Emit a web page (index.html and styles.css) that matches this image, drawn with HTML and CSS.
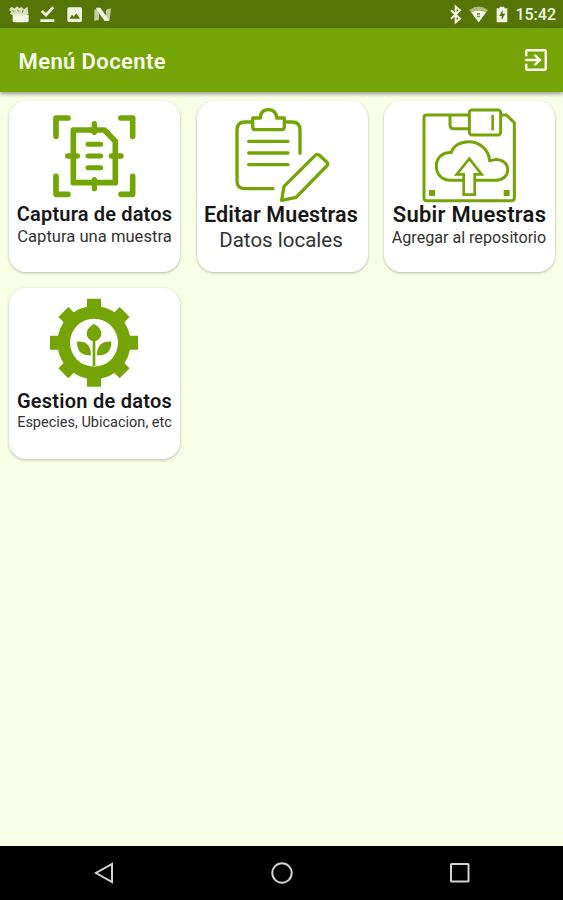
FILE: index.html
```html
<!DOCTYPE html>
<html lang="es">
<head>
<meta charset="utf-8">
<title>Menú Docente</title>
<link rel="stylesheet" href="styles.css">
</head>
<body>
<header class="status">
  <svg class="status-left" viewBox="0 0 360 84">
    <g fill="#f1f5e3">
      <path d="M38 44H86V62Q86 67 81 67H43Q38 67 38 62Z"/>
      <path d="M29 25l8-5 6 6 8-7 8 6 5-5 7 8 12-7 2 21-8 4H39l-10-5 5-6-6-5z" opacity=".85"/>
      <path d="M37 32l6 3M52 29l4 6M69 30l-2 8" stroke="#64800f" stroke-width="3"/>
      <path d="M121 58h42v8h-42zM122 35l6-5 10 9 19-20 6 6-25 26z"/>
      <path fill-rule="evenodd" d="M207 22H241Q246 22 246 27V61Q246 66 241 66H207Q202 66 202 61V27Q202 22 207 22ZM208 56H240L229 40L221 50L216 44Z"/>
      <path d="M283 30l14-6 21 23V29l15-4-4 34-12 4-20-22v18l-14 4z" opacity=".7"/>
      <path d="M287 23h14l28 40h-15z"/>
    </g>
  </svg>
  <div class="status-right">
    <svg class="status-icons" viewBox="52 0 190 84">
      <path d="M64 31L91 56L78 67V20L91 31L64 56" fill="none" stroke="#f1f5e3" stroke-width="6"/>
      <path d="M119 30Q147 9 175 30L147 67Z" fill="#a8bd75"/>
      <path d="M125 37Q147 27 169 37L147 67Z" fill="#f7faef"/>
      <path d="M142 39h9v5h-9zm0 8h9v5h-9z" fill="#76932f"/>
      <path d="M201 25h9v-5h14v5h9v42h-32z" fill="#f1f5e3"/>
      <path d="M219 30l-10 18h7v12l11-19h-8z" fill="#577506"/>
    </svg>
    <span class="clock">15:42</span>
  </div>
</header>
<div class="appbar">
  <h1>Menú Docente</h1>
  <svg class="exit" viewBox="3 3 18 18"><path fill="#fbfdf5" d="M10.09 15.59L11.5 17l5-5-5-5-1.41 1.41L12.67 11H3v2h9.67l-2.58 2.59zM19 3H5c-1.11 0-2 .9-2 2v4h2V5h14v14H5v-4H3v4c0 1.100.89 2 2 2h14c1.100 0 2-.9 2-2V5c0-1.100-.9-2-2-2z"/></svg>
</div>
<main class="grid">
  <section class="card capture">
    <svg class="art" viewBox="27 24 513 306">
      <g fill="none" stroke="#75a406" stroke-linecap="round">
        <g stroke-width="17">
          <path d="M204 75H168V130M363 75H398V130M168 250V304H204M398 250V304H363" stroke-linejoin="round"/>
        </g>
        <path d="M220 111H313L346 145V269H220Z" stroke-width="17" stroke-linejoin="round"/>
        <path d="M283 92V118M283 260V287M203 189H232M334 189H363" stroke-width="16"/>
        <path d="M264 154H302M264 189H302M264 224H302" stroke-width="15"/>
      </g>
    </svg>
    <h2>Captura de datos</h2>
    <p>Captura una muestra</p>
  </section>
  <section class="card edit">
    <svg class="art" viewBox="26 27 513 306">
      <g fill="none" stroke="#75a406" stroke-width="10" stroke-linecap="round" stroke-linejoin="round">
        <path d="M188 90H170Q146 90 146 114V266Q146 290 170 290H254M292 90H311Q335 90 335 114V184"/>
        <path d="M193 78H216Q217 53 240 53Q263 53 265 78H288V104Q288 113 279 113H202Q193 113 193 104Z"/>
        <path d="M181 148H299M181 183H299M181 218H299"/>
        <path d="M280 325L287 283L380 191Q387 184 395 191L415 210Q421 216 415 222L323 316Z"/>
      </g>
    </svg>
    <h2>Editar Muestras</h2>
    <p>Datos locales</p>
  </section>
  <section class="card upload">
    <svg class="art" viewBox="30 26 513 306">
      <g fill="none" stroke="#75a406" stroke-width="9" stroke-linejoin="round">
        <path d="M284 68H158Q150 68 150 76V317Q150 325 158 325H413Q421 325 421 317V91L397 68H381"/>
        <path d="M228 70V97Q228 109 240 109H284"/>
        <rect x="286" y="53" width="94" height="75" rx="8"/>
        <path d="M356 68V114" stroke-width="8"/>
        <path d="M268 264H229C202 264 187 244 187 221C187 196 207 179 232 181C238 160 260 148 284 148C317 148 345 173 347 206C374 194 401 208 401 232C401 252 384 264 363 264H304"/>
        <path d="M269 307V246H248L286 199L323 246H302V307Z" stroke-linejoin="miter" stroke-width="8"/>
      </g>
      <path d="M165 293h18v18h-18zM389 293h18v18h-18z" fill="#75a406"/>
    </svg>
    <h2>Subir Muestras</h2>
    <p>Agregar al repositorio</p>
  </section>
  <section class="card manage">
    <svg class="art" viewBox="27 24 513 306">
      <g fill="#75a406">
        <g transform="translate(282 188)">
          <path d="M-21-132H21V-90H-21ZM-21 90H21V132H-21ZM-132-21H-90V21H-132ZM90-21H132V21H90Z"/>
          <path transform="rotate(45)" d="M-21-130H21V-90H-21ZM-21 90H21V130H-21ZM-130-21H-90V21H-130ZM90-21H130V21H90Z"/>
          <circle r="110"/>
          <circle r="72" fill="#fff"/>
        </g>
        <path d="M282 131Q304 144 304 160Q304 177 286 184V259H278V184Q260 177 260 160Q260 144 282 131Z"/>
        <path d="M231 185C260 183 273 197 273 226C244 227 231 213 231 185ZM334 185C305 183 291 197 291 226C321 227 334 213 334 185Z"/>
      </g>
    </svg>
    <h2>Gestion de datos</h2>
    <p>Especies, Ubicacion, etc</p>
  </section>
</main>
<nav class="navbar">
  <svg viewBox="0 0 22 24"><path d="M19 3V21L3 12Z"/></svg>
  <svg viewBox="0 0 22 24"><circle cx="11" cy="12" r="9.700"/></svg>
  <svg viewBox="0 0 22 24"><rect x="2" y="3" width="17.500" height="17.500" rx=".6"/></svg>
</nav>
</body>
</html>
```
FILE: styles.css
```css
* { box-sizing: border-box; }
body {
  margin: 0;
  height: 900px;
  display: flex;
  flex-direction: column;
  background: #f9fee7;
  font-family: Roboto, sans-serif;
  color: #171717;
  overflow: hidden;
}
h1, h2, p { margin: 0; white-space: nowrap; }
svg { display: block; }
.status {
  height: 28px;
  flex: none;
  display: flex;
  justify-content: space-between;
  background: #577506;
}
.status-left { width: 120px; height: 28px; }
.status-right { display: flex; padding-right: 7px; }
.status-icons { width: 63.3px; height: 28px; margin-right: 5px; }
.clock {
  font-size: 16px;
  font-weight: 500;
  line-height: 30px;
  color: #f4f8e8;
}
.appbar {
  height: 64px;
  flex: none;
  display: flex;
  align-items: center;
  justify-content: space-between;
  padding: 0 16px 0 18.5px;
  background: #75a406;
  box-shadow: 0 2px 4px rgba(0, 0, 0, .4);
}
.appbar h1 {
  font-size: 22px;
  font-weight: 600;
  line-height: 26px;
  letter-spacing: .4px;
  padding-top: 3px;
  color: #f8fbed;
}
.exit { width: 22px; height: 22px; }
.grid {
  flex: 1;
  display: grid;
  grid-template-columns: repeat(3, 171px);
  grid-auto-rows: 171px;
  gap: 16.5px;
  padding: 8.5px 8px 0 9px;
}
.card {
  background: #fff;
  border-radius: 17px;
  box-shadow: 0 1px 3px rgba(0, 0, 0, .28);
  display: flex;
  flex-direction: column;
  align-items: center;
}
.art { width: 171px; height: 102px; flex: none; }
.card h2 { font-weight: 600; font-size: 20px; line-height: 23px; letter-spacing: .17px; }
.card p { color: #333; }
.capture p { font-size: 16.6px; line-height: 21px; }
.edit h2, .upload h2 { font-size: 21.5px; line-height: 24px; }
.edit h2 { letter-spacing: .12px; margin-right: 2px; }
.upload h2 { font-size: 22px; letter-spacing: .25px; }
.edit p { font-size: 20.5px; line-height: 26px; margin-right: 2px; }
.upload p { font-size: 16.100px; line-height: 22px; margin-right: 1px; }
.manage h2 { letter-spacing: .25px; }
.manage p { font-size: 14.5px; line-height: 20px; }
.navbar {
  height: 54px;
  flex: none;
  display: flex;
  justify-content: space-between;
  align-items: center;
  padding: 0 92px 0 93px;
  background: #000;
}
.navbar svg {
  width: 22px;
  height: 24px;
  fill: none;
  stroke: #d2d2d2;
  stroke-width: 2;
}
```
